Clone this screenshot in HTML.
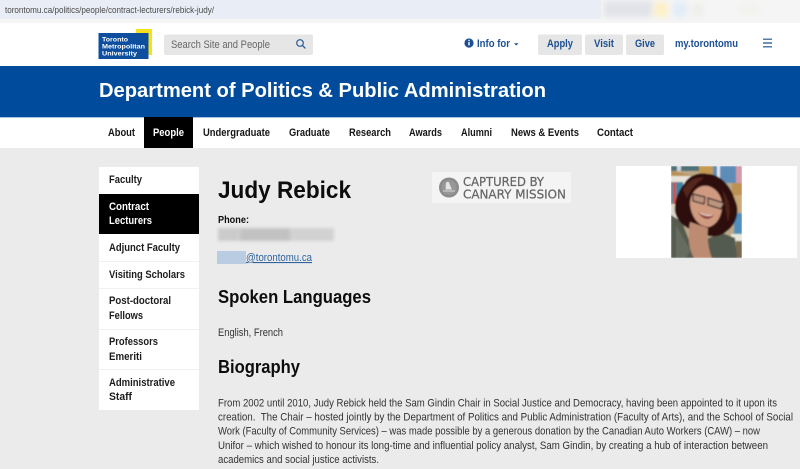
<!DOCTYPE html>
<html><head><meta charset="utf-8"><style>
html,body{margin:0;padding:0;width:800px;height:469px;overflow:hidden;background:#ebebeb}
svg{display:block}
text{font-family:"Liberation Sans",sans-serif;white-space:pre}
.b{font-weight:700}
.nav{font-size:10.900px;font-weight:700;fill:#161616}
.side{font-size:10.900px;font-weight:700;fill:#1c1c1c}
.body{font-size:10.900px;fill:#333}
.blue{fill:#1d4f91;font-weight:700;font-size:10.900px}
.can{font-family:"DejaVu Sans",sans-serif;font-size:12.500px;fill:#666;stroke:#666;stroke-width:.25px}
</style></head><body>
<svg width="800" height="469" viewBox="0 0 800 469" xmlns="http://www.w3.org/2000/svg">
<defs>
<filter id="s" x="-5%" y="-5%" width="110%" height="110%"><feGaussianBlur stdDeviation="0.3"/></filter>
<filter id="p" x="-10%" y="-10%" width="120%" height="120%"><feGaussianBlur stdDeviation="0.8"/></filter>
<filter id="r" x="-10%" y="-30%" width="120%" height="160%"><feGaussianBlur stdDeviation="1.500"/></filter>
<filter id="m" x="-20%" y="-20%" width="140%" height="140%"><feGaussianBlur stdDeviation="3"/></filter>
<clipPath id="pc"><rect x="671" y="166" width="71" height="92"/></clipPath>
</defs>
<rect width="800" height="469" fill="#ebebeb"/>
<!-- browser bar -->
<rect width="800" height="19" fill="#f5f5f5"/>
<rect width="601" height="19" fill="#e9edf6"/>
<rect y="19" width="800" height="4" fill="#f5f5f5"/>
<g filter="url(#m)">
<rect x="604" y="1" width="48" height="16" fill="#e2e3e8"/>
<rect x="654" y="2" width="14" height="15" fill="#fdf0c8"/>
<rect x="673" y="2" width="14" height="15" fill="#e2ecf8"/>
<rect x="692" y="4" width="12" height="12" fill="#eeeeea"/>
<rect x="740" y="4" width="20" height="12" fill="#f2f3ee"/>
</g>
<text x="5" y="13" font-size="9.200" fill="#4a4a4a" textLength="209" lengthAdjust="spacingAndGlyphs">torontomu.ca/politics/people/contract-lecturers/rebick-judy/</text>
<rect y="23" width="800" height="43" fill="#fff"/>
<g filter="url(#s)">
<!-- logo -->
<rect x="136" y="29" width="16" height="26" fill="#f7e11f"/>
<rect x="98.500" y="33" width="50" height="26" fill="#0f4f9e"/>
<text x="102" y="41.500" font-size="6.500" class="b" fill="#fff" textLength="26" lengthAdjust="spacingAndGlyphs">Toronto</text>
<text x="102" y="48.500" font-size="6.500" class="b" fill="#fff" textLength="43" lengthAdjust="spacingAndGlyphs">Metropolitan</text>
<text x="102" y="55.500" font-size="6.500" class="b" fill="#fff" textLength="35" lengthAdjust="spacingAndGlyphs">University</text>
<!-- search -->
<rect x="164" y="34.500" width="149" height="20.500" rx="2" fill="#e6e6e6"/>
<text x="171" y="48" font-size="11" fill="#666" textLength="99" lengthAdjust="spacingAndGlyphs">Search Site and People</text>
<circle cx="300" cy="43" r="3.300" fill="none" stroke="#2a5a98" stroke-width="1.200"/>
<path d="M302.400 45.400L305 48" stroke="#2a5a98" stroke-width="1.300" stroke-linecap="round"/>
<!-- right header -->
<circle cx="469" cy="43" r="4.600" fill="#1d4f91"/>
<rect x="468.300" y="42" width="1.400" height="3.400" fill="#fff"/>
<rect x="468.300" y="39.800" width="1.400" height="1.300" fill="#fff"/>
<text x="477" y="47" class="blue" textLength="33" lengthAdjust="spacingAndGlyphs">Info for</text>
<path d="M514 43.200h4.600l-2.300 2.300z" fill="#1d4f91"/>
<rect x="538" y="34.500" width="44" height="20.500" rx="2" fill="#e6e6e6"/>
<rect x="585" y="34.500" width="38" height="20.500" rx="2" fill="#e6e6e6"/>
<rect x="626" y="34.500" width="38" height="20.500" rx="2" fill="#e6e6e6"/>
<text x="547" y="47" class="blue" textLength="26" lengthAdjust="spacingAndGlyphs">Apply</text>
<text x="594" y="47" class="blue" textLength="20" lengthAdjust="spacingAndGlyphs">Visit</text>
<text x="635" y="47" class="blue" textLength="20" lengthAdjust="spacingAndGlyphs">Give</text>
<text x="675" y="47" class="blue" textLength="63" lengthAdjust="spacingAndGlyphs">my.torontomu</text>
<path d="M763 39.200h9M763 43h9M763 46.800h9" stroke="#1d4f91" stroke-width="1.200"/>
<!-- banner -->
<rect y="66" width="800" height="51" fill="#004c9b"/>
<rect y="117" width="800" height="1" fill="#9dc3e6"/>
<text x="99" y="97" font-size="20.500" class="b" fill="#fff" textLength="447" lengthAdjust="spacingAndGlyphs">Department of Politics &amp; Public Administration</text>
<!-- nav -->
<rect y="118" width="800" height="30" fill="#fff"/>
<rect x="144" y="117" width="49" height="31" fill="#000"/>
<text x="108" y="136" class="nav" textLength="27" lengthAdjust="spacingAndGlyphs">About</text>
<text x="153" y="136" class="nav" style="fill:#fff" textLength="31" lengthAdjust="spacingAndGlyphs">People</text>
<text x="203" y="136" class="nav" textLength="67" lengthAdjust="spacingAndGlyphs">Undergraduate</text>
<text x="289" y="136" class="nav" textLength="41" lengthAdjust="spacingAndGlyphs">Graduate</text>
<text x="349" y="136" class="nav" textLength="42" lengthAdjust="spacingAndGlyphs">Research</text>
<text x="409" y="136" class="nav" textLength="33" lengthAdjust="spacingAndGlyphs">Awards</text>
<text x="461" y="136" class="nav" textLength="31" lengthAdjust="spacingAndGlyphs">Alumni</text>
<text x="511" y="136" class="nav" textLength="68" lengthAdjust="spacingAndGlyphs">News &amp; Events</text>
<text x="597" y="136" class="nav" textLength="36" lengthAdjust="spacingAndGlyphs">Contact</text>
<!-- sidebar -->
<rect x="99" y="167" width="100" height="243" fill="#fff"/>
<rect x="99" y="194" width="100" height="40" fill="#000"/>
<path d="M99 261.500h100M99 288.500h100M99 329.500h100M99 369.500h100" stroke="#f1f1f1"/>
<text x="109" y="183" class="side" textLength="33" lengthAdjust="spacingAndGlyphs">Faculty</text>
<text x="109" y="210" class="side" style="fill:#fff" textLength="40" lengthAdjust="spacingAndGlyphs">Contract</text>
<text x="109" y="224" class="side" style="fill:#fff" textLength="43" lengthAdjust="spacingAndGlyphs">Lecturers</text>
<text x="109" y="251" class="side" textLength="71" lengthAdjust="spacingAndGlyphs">Adjunct Faculty</text>
<text x="109" y="278" class="side" textLength="76" lengthAdjust="spacingAndGlyphs">Visiting Scholars</text>
<text x="109" y="304" class="side" textLength="62" lengthAdjust="spacingAndGlyphs">Post-doctoral</text>
<text x="109" y="319" class="side" textLength="34" lengthAdjust="spacingAndGlyphs">Fellows</text>
<text x="109" y="345" class="side" textLength="49" lengthAdjust="spacingAndGlyphs">Professors</text>
<text x="109" y="360" class="side" textLength="33" lengthAdjust="spacingAndGlyphs">Emeriti</text>
<text x="109" y="386" class="side" textLength="66" lengthAdjust="spacingAndGlyphs">Administrative</text>
<text x="109" y="400" class="side" textLength="23" lengthAdjust="spacingAndGlyphs">Staff</text>
<!-- content -->
<text x="218" y="198" font-size="24" class="b" fill="#111" textLength="133" lengthAdjust="spacingAndGlyphs">Judy Rebick</text>
<text x="218" y="223" font-size="10.500" class="b" fill="#111" textLength="31" lengthAdjust="spacingAndGlyphs">Phone:</text>
<text x="246" y="261" font-size="11" fill="#2d639e" text-decoration="underline" textLength="66" lengthAdjust="spacingAndGlyphs">@torontomu.ca</text>
<text x="218" y="303" font-size="18" class="b" fill="#111" textLength="153" lengthAdjust="spacingAndGlyphs">Spoken Languages</text>
<text x="218" y="336" class="body" textLength="65" lengthAdjust="spacingAndGlyphs">English, French</text>
<text x="218" y="373" font-size="18" class="b" fill="#111" textLength="82" lengthAdjust="spacingAndGlyphs">Biography</text>
<text x="218" y="406.500" class="body" textLength="559" lengthAdjust="spacingAndGlyphs">From 2002 until 2010, Judy Rebick held the Sam Gindin Chair in Social Justice and Democracy, having been appointed to it upon its</text>
<text x="218" y="420.500" class="body" textLength="575" lengthAdjust="spacingAndGlyphs">creation.  The Chair – hosted jointly by the Department of Politics and Public Administration (Faculty of Arts), and the School of Social</text>
<text x="218" y="434.500" class="body" textLength="542" lengthAdjust="spacingAndGlyphs">Work (Faculty of Community Services) – was made possible by a generous donation by the Canadian Auto Workers (CAW) – now</text>
<text x="218" y="449" class="body" textLength="550" lengthAdjust="spacingAndGlyphs">Unifor – which wished to honour its long-time and influential policy analyst, Sam Gindin, by creating a hub of interaction between</text>
<text x="218" y="463" class="body" textLength="161" lengthAdjust="spacingAndGlyphs">academics and social justice activists.</text>
<!-- canary -->
<rect x="432" y="172" width="139" height="31" fill="#f4f4f4"/>
<circle cx="449" cy="187.500" r="10" fill="#8b8b8b"/>
<circle cx="449" cy="187.500" r="7.500" fill="#979797"/>
<path d="M446 183c1.500-2 3.500-1 3.500 1l2.500 5.500h-6.500z" fill="#e4e4e4"/>
<path d="M443 191h12" stroke="#d6d6d6" stroke-width="1"/>
<text x="463" y="186" class="can" textLength="81" lengthAdjust="spacingAndGlyphs">CAPTURED BY</text>
<text x="463" y="198.500" class="can" textLength="103" lengthAdjust="spacingAndGlyphs">CANARY MISSION</text>
<!-- photo -->
<rect x="616" y="166" width="181" height="92" fill="#fff"/>
</g>
<g clip-path="url(#pc)"><g filter="url(#p)">
<rect x="671" y="166" width="71" height="92" fill="#b9a888"/>
<rect x="671" y="166" width="28" height="5" fill="#4f6f78"/>
<rect x="677" y="166" width="4" height="5" fill="#cfd6d8"/>
<rect x="699" y="166" width="14" height="10" fill="#c49a52"/>
<rect x="713" y="166" width="29" height="17" fill="#5d8cb6"/>
<rect x="717" y="166" width="3" height="17" fill="#dfe6ee"/>
<rect x="736" y="166" width="6" height="17" fill="#d49aa6"/>
<path d="M671 171L700 177V182L671 176Z" fill="#b98f50"/>
<rect x="671" y="176" width="20" height="8" fill="#e8e4da"/>
<rect x="671" y="182" width="12" height="24" fill="#3e86a6"/>
<rect x="673" y="182" width="3" height="22" fill="#cf5443"/>
<rect x="671" y="204" width="10" height="16" fill="#ddd6c8"/>
<rect x="732" y="183" width="10" height="12" fill="#bd9150"/>
<rect x="734" y="195" width="8" height="18" fill="#caa878"/>
<rect x="734" y="213" width="8" height="21" fill="#4f8fbe"/>
<rect x="731" y="234" width="11" height="7" fill="#e6e6da"/>
<rect x="736" y="241" width="6" height="17" fill="#7a6a50"/>
<path d="M671 215L682 222L696 258H671Z" fill="#545b50"/>
<path d="M704 240L722 233L735 238L737 258H704Z" fill="#525a4f"/>
<path d="M676 225L690 250L686 258H676Z" fill="#666d60"/>
<path d="M675 212C674 200 679 190 684 184C689 175 699 172 708 174C720 174 731 186 735 200C741 212 735 226 727 231C720 238 708 238 700 232C688 230 678 224 675 212Z" fill="#2e100d"/>
<path d="M683 190C688 180 698 176 704 178C697 182 690 190 687 198Z" fill="#54261d"/>
<path d="M722 190C729 198 732 210 728 222C726 214 725 200 722 190Z" fill="#4e2119"/>
<path d="M690 222C688 236 688 248 694 258H712C708 248 707 238 708 228Z" fill="#bd8b72"/>
<path d="M690 204C690 192 699 184 708 186C715 188 720 193 722 202C723 212 719 224 709 227C698 227 691 216 690 204Z" fill="#cf9a80"/>
<path d="M693 194L705 197L704 204L693 201ZM708 198L724 203L721 209L708 205Z" fill="#bb957f" stroke="#32252a" stroke-width="1.200"/>
<path d="M698 212C703 216 710 217 714 215C710 221 702 220 698 212Z" fill="#8e423c"/>
<path d="M700 213C704 215.500 709 216 712 215.200" stroke="#efdcd2" stroke-width="1" fill="none"/>
</g></g>
<!-- redactions -->
<g filter="url(#r)">
<rect x="218" y="228" width="116" height="13" fill="#d2d2d2"/>
<rect x="240" y="228" width="50" height="13" fill="#c2c2c2"/>
<rect x="218" y="228" width="20" height="13" fill="#cbcbcb"/>
</g>
<g filter="url(#s)">
<rect x="217" y="251" width="29" height="13" fill="#b9cce2"/>
</g>
</svg>
</body></html>
